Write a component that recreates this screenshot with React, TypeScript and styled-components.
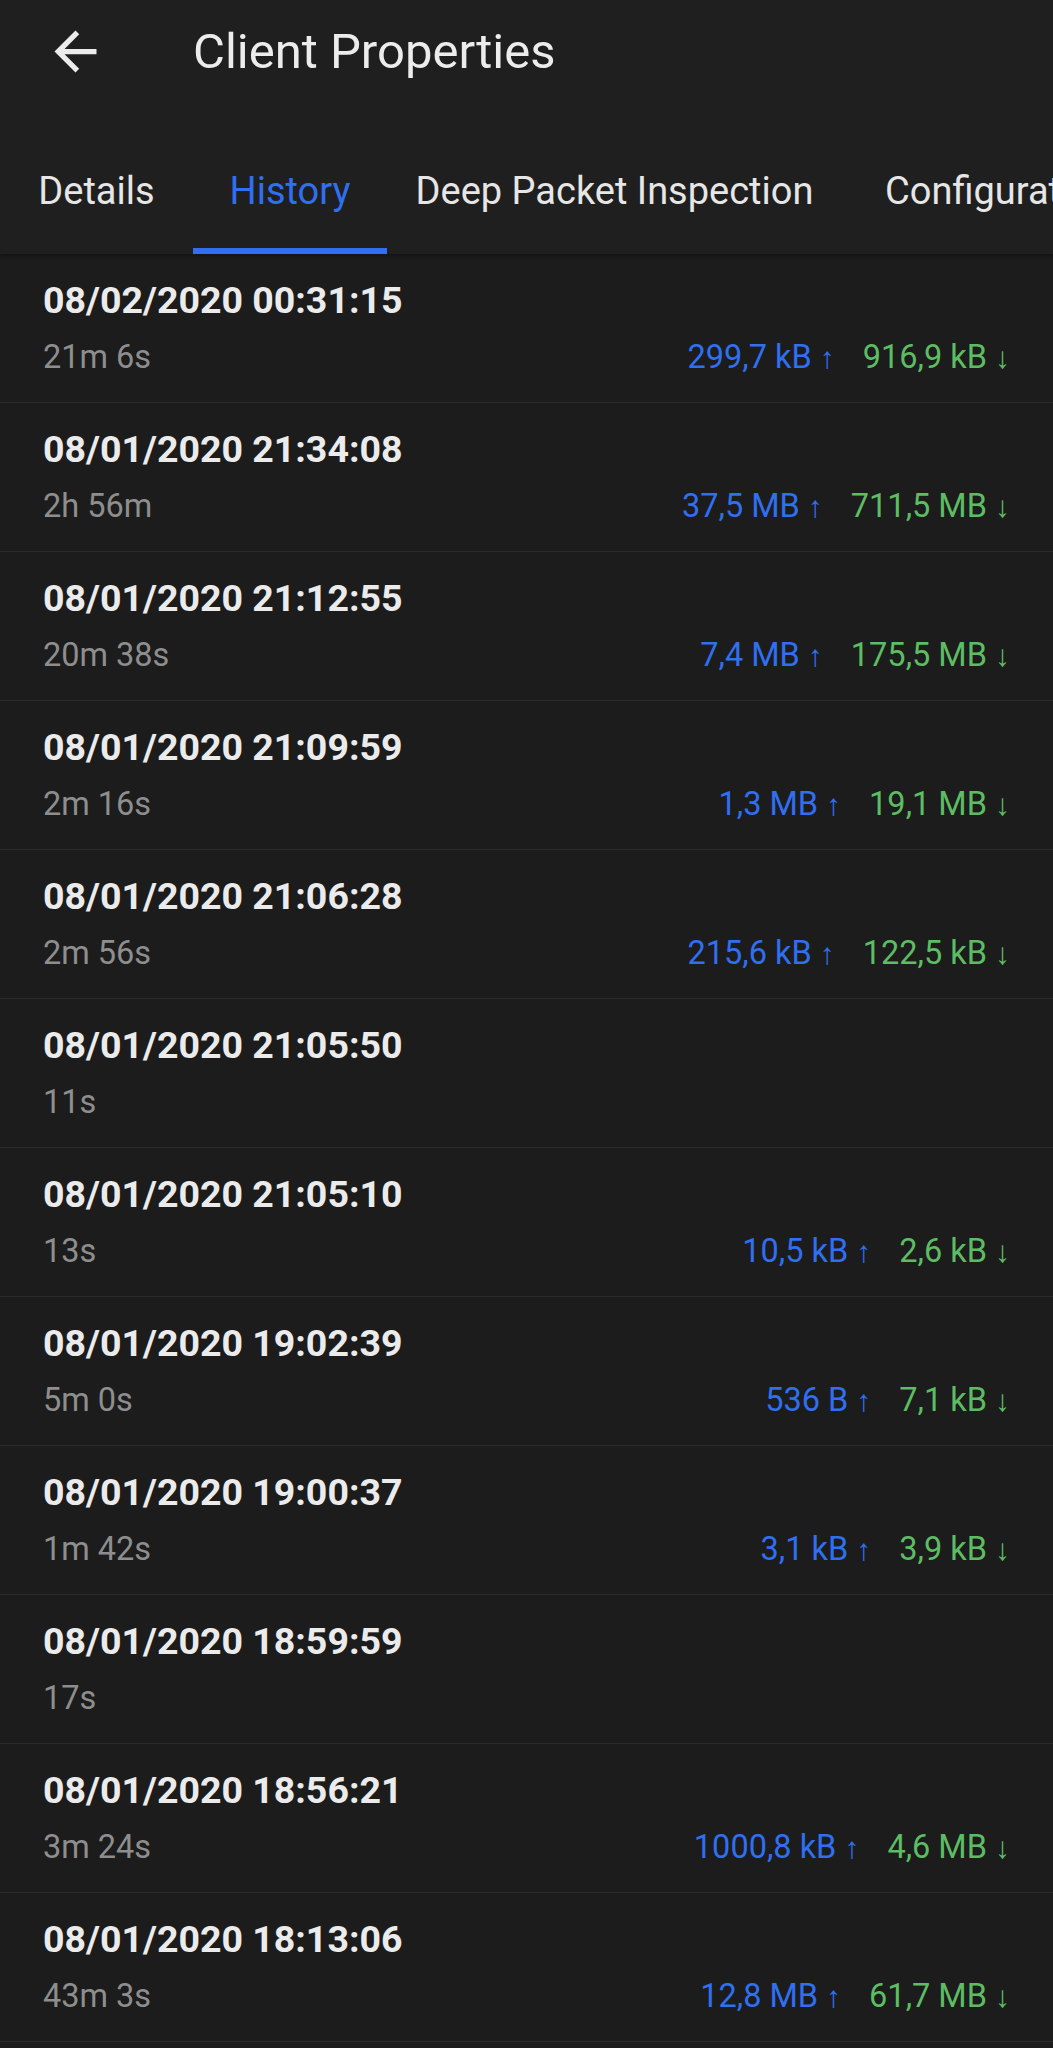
import React from "react";
import styled, { createGlobalStyle } from "styled-components";

const Global = createGlobalStyle`
  html, body { margin: 0; padding: 0; background: #1c1c1c; }
  body { font-family: Roboto, "Noto Sans", "Liberation Sans", sans-serif; }
  * { box-sizing: border-box; }
`;

const Screen = styled.div`
  width: 1053px;
  min-height: 2048px;
  background: #1c1c1c;
  overflow: hidden;
`;

const Header = styled.header`
  background: #1f1f1f;
  box-shadow: 0 2px 4px rgba(0, 0, 0, 0.35);
  position: relative;
  z-index: 1;
`;

const Toolbar = styled.div`
  height: 128px;
  display: flex;
  align-items: center;
  padding: 0 0 26px 44px;
`;

const BackButton = styled.button`
  width: 63px;
  height: 63px;
  padding: 0;
  border: 0;
  background: transparent;
  display: flex;
  align-items: center;
  justify-content: center;
  color: #ececec;
`;

const Title = styled.h1`
  margin: 0 0 0 86px;
  font-size: 49px;
  font-weight: 400;
  color: #ececec;
  letter-spacing: 0;
`;

const TabBar = styled.nav`
  height: 126px;
  display: flex;
  white-space: nowrap;
`;

const Tab = styled.div<{ $w: number; $active?: boolean }>`
  flex: 0 0 ${(p) => p.$w}px;
  position: relative;
  display: flex;
  align-items: center;
  justify-content: center;
  font-size: 38px;
  color: ${(p) => (p.$active ? "#2f6ff0" : "#e6e6e6")};
  &::after {
    content: "";
    display: ${(p) => (p.$active ? "block" : "none")};
    position: absolute;
    left: 0;
    right: 0;
    bottom: 0;
    height: 6px;
    background: #2f6ff0;
  }
`;

const List = styled.div`
  display: flex;
  flex-direction: column;
`;

const Row = styled.div`
  height: 149px;
  padding: 24px 43px 0 43px;
  border-bottom: 1px solid #2a2a2a;
  display: flex;
  flex-direction: column;
  gap: 15px;
`;

const DateText = styled.div`
  height: 44px;
  line-height: 44px;
  font-size: 37.5px;
  font-weight: 700;
  color: #ebebeb;
`;

const SubLine = styled.div`
  height: 40px;
  line-height: 40px;
  display: flex;
  justify-content: space-between;
  font-size: 32.5px;
`;

const Duration = styled.span`
  color: #8e8e8e;
`;

const Traffic = styled.span`
  display: flex;
  gap: 28px;
`;

const Amount = styled.span<{ $dir: "up" | "down" }>`
  color: ${(p) => (p.$dir === "up" ? "#2f6ff0" : "#5dbd63")};
`;

const Arrow = styled.span`
  font-size: 30px;
  margin-left: 8px;
`;

type Entry = { date: string; dur: string; up?: string; down?: string };

const entries: Entry[] = [
  { date: "08/02/2020 00:31:15", dur: "21m 6s", up: "299,7 kB", down: "916,9 kB" },
  { date: "08/01/2020 21:34:08", dur: "2h 56m", up: "37,5 MB", down: "711,5 MB" },
  { date: "08/01/2020 21:12:55", dur: "20m 38s", up: "7,4 MB", down: "175,5 MB" },
  { date: "08/01/2020 21:09:59", dur: "2m 16s", up: "1,3 MB", down: "19,1 MB" },
  { date: "08/01/2020 21:06:28", dur: "2m 56s", up: "215,6 kB", down: "122,5 kB" },
  { date: "08/01/2020 21:05:50", dur: "11s" },
  { date: "08/01/2020 21:05:10", dur: "13s", up: "10,5 kB", down: "2,6 kB" },
  { date: "08/01/2020 19:02:39", dur: "5m 0s", up: "536 B", down: "7,1 kB" },
  { date: "08/01/2020 19:00:37", dur: "1m 42s", up: "3,1 kB", down: "3,9 kB" },
  { date: "08/01/2020 18:59:59", dur: "17s" },
  { date: "08/01/2020 18:56:21", dur: "3m 24s", up: "1000,8 kB", down: "4,6 MB" },
  { date: "08/01/2020 18:13:06", dur: "43m 3s", up: "12,8 MB", down: "61,7 MB" },
];

const tabs = [
  { label: "Details", w: 193 },
  { label: "History", w: 194, active: true },
  { label: "Deep Packet Inspection", w: 455 },
  { label: "Configuration", w: 314 },
];

export default function App() {
  return (
    <Screen>
      <Global />
      <Header>
        <Toolbar>
          <BackButton aria-label="Back">
            <svg width="63" height="63" viewBox="0 0 24 24" fill="currentColor">
              <path d="M20 11H7.83l5.59-5.59L12 4l-8 8 8 8 1.41-1.41L7.83 13H20v-2z" />
            </svg>
          </BackButton>
          <Title>Client Properties</Title>
        </Toolbar>
        <TabBar>
          {tabs.map((t) => (
            <Tab key={t.label} $w={t.w} $active={t.active}>
              {t.label}
            </Tab>
          ))}
        </TabBar>
      </Header>
      <List>
        {entries.map((e) => (
          <Row key={e.date}>
            <DateText>{e.date}</DateText>
            <SubLine>
              <Duration>{e.dur}</Duration>
              {e.up && e.down && (
                <Traffic>
                  <Amount $dir="up">
                    {e.up}
                    <Arrow>↑</Arrow>
                  </Amount>
                  <Amount $dir="down">
                    {e.down}
                    <Arrow>↓</Arrow>
                  </Amount>
                </Traffic>
              )}
            </SubLine>
          </Row>
        ))}
      </List>
    </Screen>
  );
}
